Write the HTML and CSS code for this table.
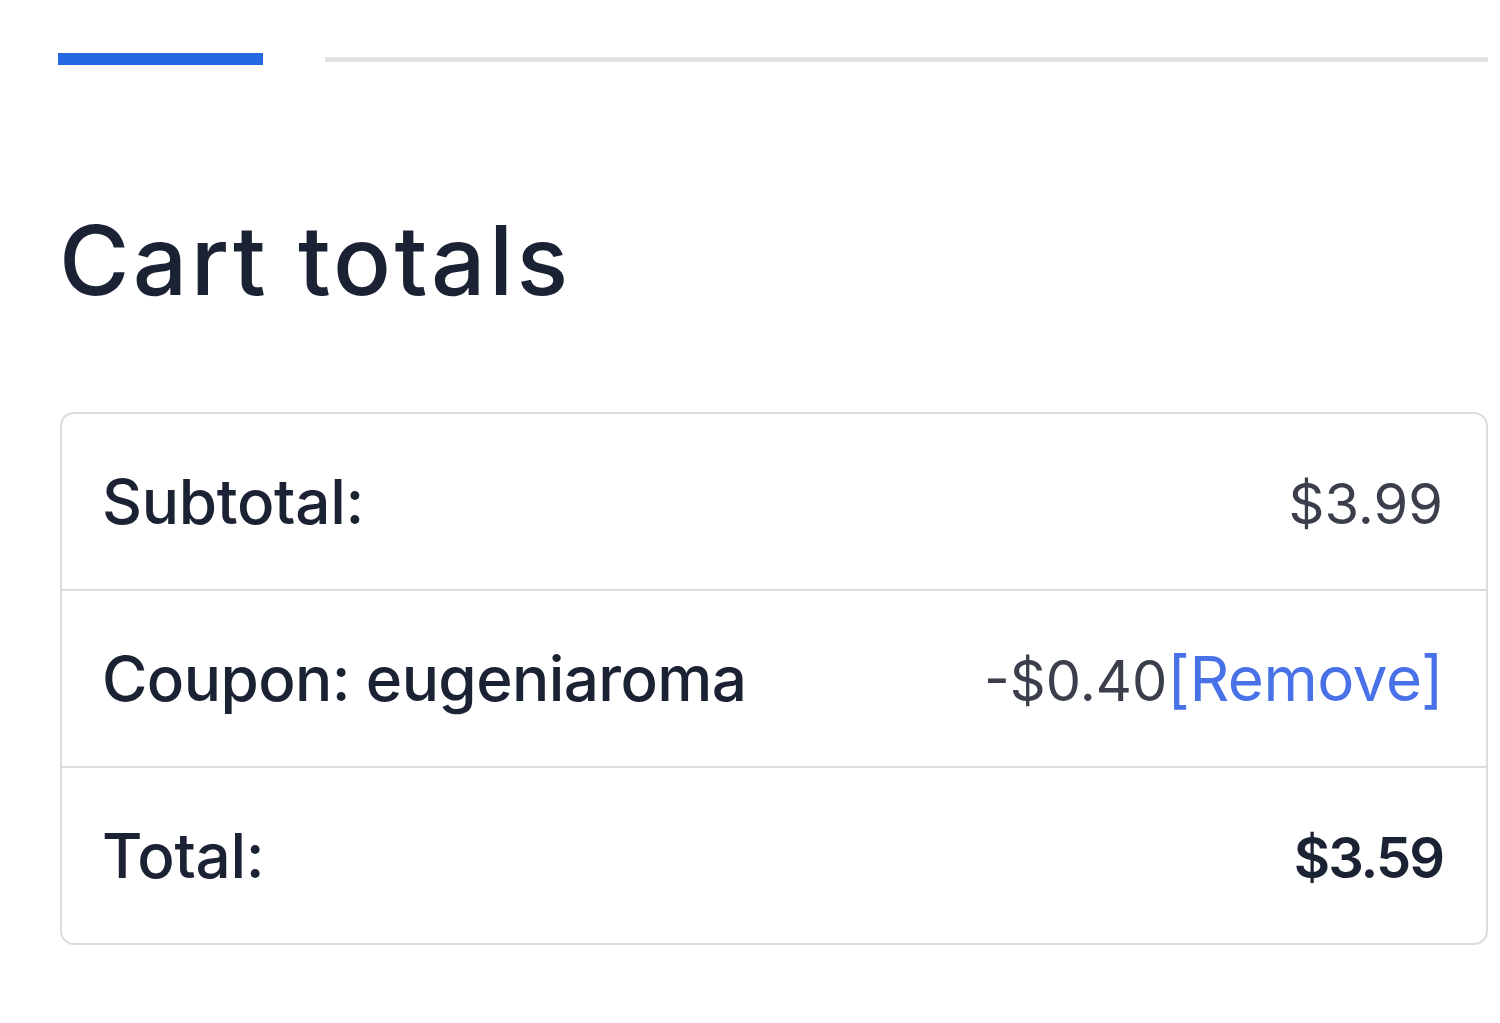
FILE: index.html
```html
<!DOCTYPE html>
<html lang="en">
<head>
<meta charset="utf-8">
<title>Cart totals</title>
<link rel="stylesheet" href="styles.css">
</head>
<body>
<div class="page">
  <div class="steps">
    <span class="step step-active"></span>
    <span class="step step-rest"></span>
  </div>
  <h2 class="title">Cart totals</h2>
  <div class="totals">
    <div class="row">
      <span class="label">Subtotal:</span>
      <span class="value"><span class="amount">$3.99</span></span>
    </div>
    <div class="row">
      <span class="label label-coupon">Coupon: eugeniaroma</span>
      <span class="value"><span class="amount">-$0.40</span><a class="remove" href="#">[Remove]</a></span>
    </div>
    <div class="row">
      <span class="label">Total:</span>
      <span class="value value-strong"><span class="amount amount-strong">$3.59</span></span>
    </div>
  </div>
</div>
</body>
</html>
```
FILE: styles.css
```css
html, body {
  margin: 0;
  padding: 0;
  background: #ffffff;
}
body {
  font-family: Inter, "DejaVu Sans", sans-serif;
  color: #1b2233;
}
.page {
  padding: 53px 12px 0 58px;
}
.steps {
  display: flex;
  align-items: center;
  gap: 62px;
  height: 12px;
}
.step-active {
  width: 205px;
  height: 12px;
  background: #2468e2;
}
.step-rest {
  flex: 1;
  height: 5px;
  background: #e2e2e2;
}
.title {
  margin: 140px 0 0 1px;
  font-size: 96px;
  line-height: 110px;
  font-weight: 500;
  letter-spacing: 3.4px;
  color: #1b2233;
}
.totals {
  margin: 97px 0 0 2px;
  border: 2px solid #dcdcdc;
  border-radius: 14px;
}
.row {
  display: flex;
  justify-content: space-between;
  align-items: center;
  height: 175px;
  padding: 0 43px 0 40px;
  font-size: 62px;
}
.row + .row {
  border-top: 2px solid #dcdcdc;
}
.label {
  font-weight: 500;
  letter-spacing: -0.3px;
  color: #1b2233;
}
.label-coupon {
  letter-spacing: -0.6px;
}
.value {
  font-weight: 400;
  color: #3a3f4b;
}
.amount {
  font-size: 56px;
}
.value-strong {
  font-weight: 600;
  color: #1b2233;
}
.amount-strong {
  letter-spacing: -2px;
}
.remove {
  color: #4a72e8;
  text-decoration: none;
  letter-spacing: -0.5px;
}
```
